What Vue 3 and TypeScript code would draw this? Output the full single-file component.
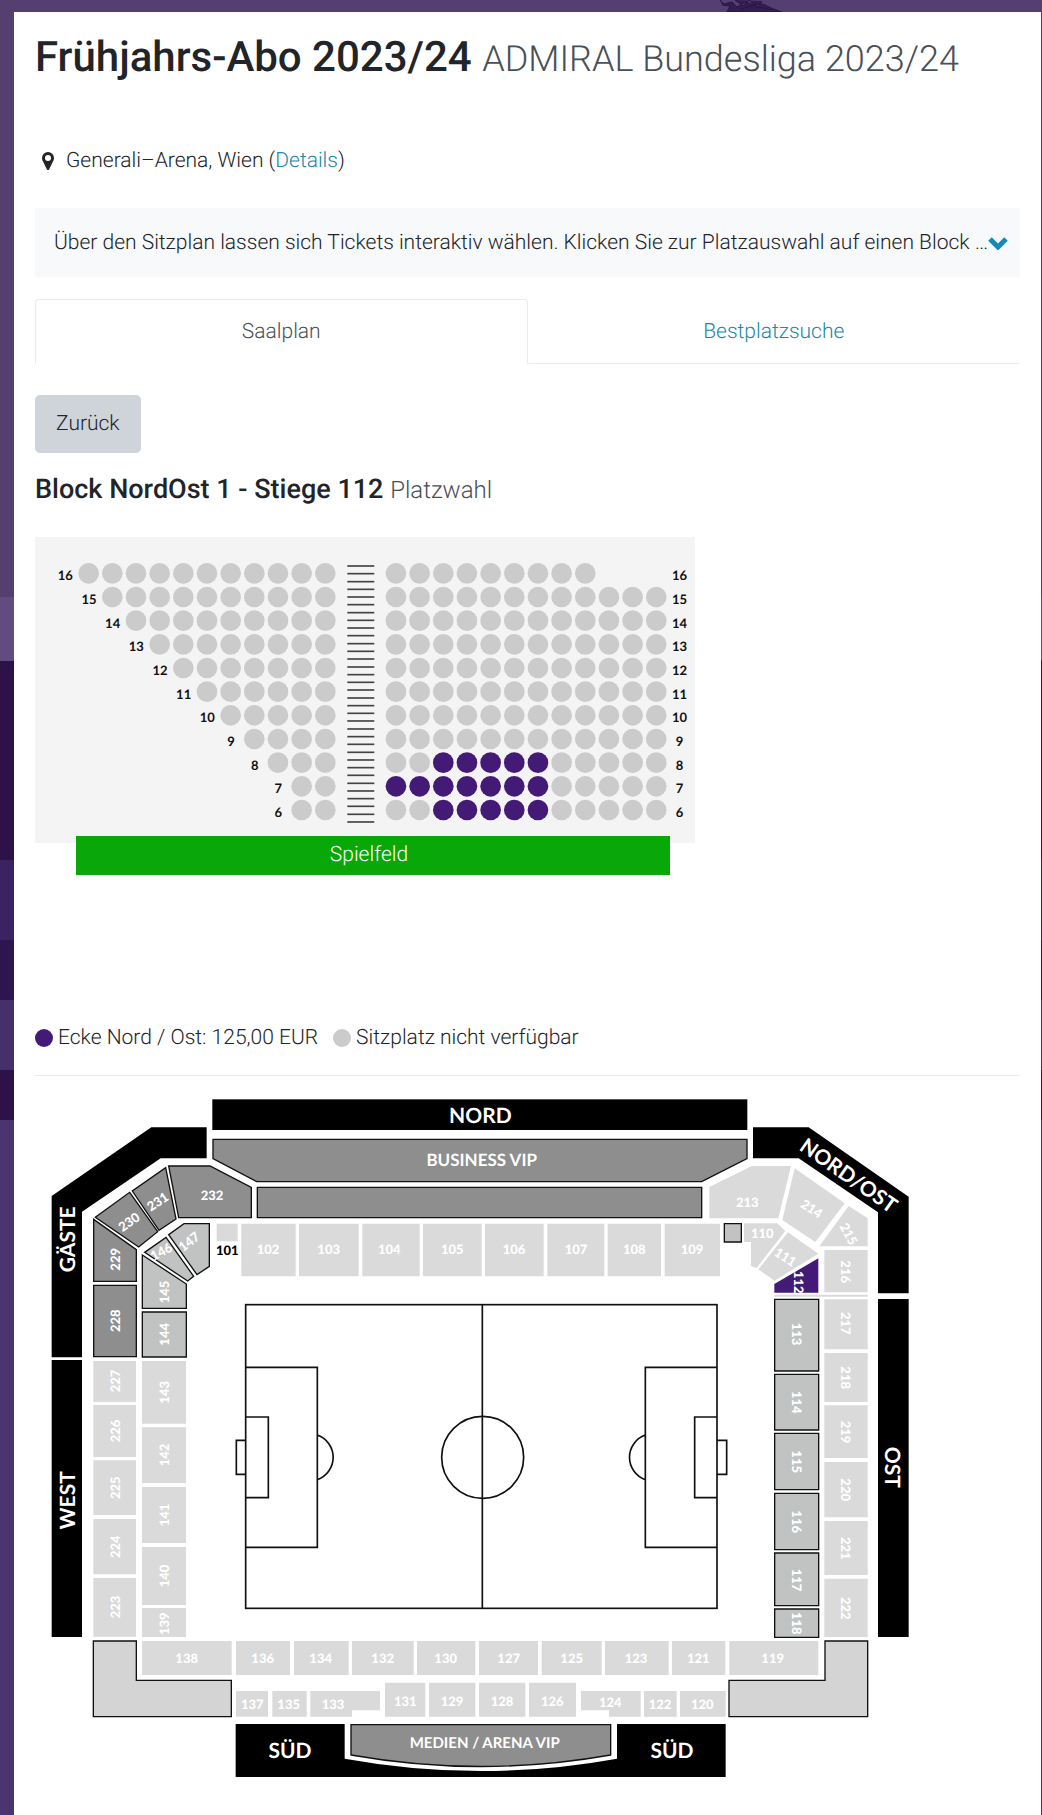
<script setup lang="ts">
import { ref } from 'vue'

type Kind = 'vip' | 'guest' | 'off' | 'selected' | 'corner'

interface Block {
  points: string
  kind: Kind
  label?: string
  x?: number
  y?: number
  angle?: number
}

interface Seat {
  x: number
  y: number
  free: boolean
  id: string
}

const PITCH = 71
const rows = Array.from({ length: 11 }, (_, i) => {
  const y = 109 + PITCH * i
  const first = Math.min(i, 9)
  return { number: 16 - i, y, labelX: 161 + PITCH * (first - 1) + 1, first }
})

const isFree = (row: number, col: number): boolean =>
  (row === 7 && col < 7) || ((row === 8 || row === 6) && col > 1 && col < 7)

const seats: Seat[] = rows.flatMap((row) => {
  const left = Array.from({ length: 11 - row.first }, (_, i) => ({
    x: 161 + PITCH * (row.first + i),
    y: row.y,
    free: false,
    id: `${row.number}-l${i}`,
  }))
  const right = Array.from({ length: row.number === 16 ? 9 : 12 }, (_, i) => ({
    x: 1083 + PITCH * i,
    y: row.y,
    free: isFree(row.number, i),
    id: `${row.number}-r${i}`,
  }))
  return [...left, ...right]
})

const steps = Array.from({ length: 34 }, (_, i) => Math.round(87 + (i * 768) / 33))

const box = (
  x: number, y: number, w: number, h: number, kind: Kind,
  label?: string, lx?: number, ly?: number, angle = 0,
): Block => ({
  points: `${x},${y} ${x + w},${y} ${x + w},${y + h} ${x},${y + h}`,
  kind, label, x: lx, y: ly, angle,
})

const column = (x: number, w: number, lx: number, angle: number, kind: Kind, list: number[][]): Block[] =>
  list.map(([n, y, h, ly]) => box(x, y, w, h, kind, String(n), lx, ly, angle))

const line = (y: number, h: number, ly: number, list: number[][]): Block[] =>
  list.map(([n, x, right, lx]) => box(x, y, right - x, h, 'off', String(n), lx, ly))

const blocks: Block[] = [
  { points: '534,130 2136,130 2136,188 2000,257 665,257 534,188', kind: 'vip' },
  box(667, 274, 1333, 91, 'vip'),
  { points: '401,210 525,210 649,274 649,365 431,365', kind: 'vip', label: '232', x: 531, y: 299 },
  { points: '392,215 423,369 372,403 292,285', kind: 'vip', label: '231', x: 368, y: 317, angle: -33 },
  { points: '284,289 368,407 311,453 181,364', kind: 'vip', label: '230', x: 282, y: 378, angle: -35 },
  { points: '176,370 304,461 304,556 176,556', kind: 'vip', label: '229', x: 241, y: 490, angle: -90 },
  box(176, 568, 128, 214, 'vip', '228', 241, 674, -90),
  { points: '447,383 523,383 523,511 486,536 401,416', kind: 'guest', label: '147', x: 462, y: 437, angle: -38 },
  { points: '393,424 476,541 458,555 329,469', kind: 'guest', label: '146', x: 379, y: 467, angle: -28 },
  { points: '322,477 454,564 454,637 322,637', kind: 'guest', label: '145', x: 389, y: 588, angle: -90 },
  box(322, 648, 132, 135, 'guest', '144', 389, 715, -90),
  box(545, 383, 63, 53, 'off'),
  ...line(383, 158, 461, [
    [102, 619, 782, 699], [103, 792, 971, 881], [104, 982, 1154, 1063], [105, 1164, 1340, 1252],
    [106, 1350, 1526, 1437], [107, 1537, 1708, 1623], [108, 1718, 1878, 1798], [109, 1889, 2055, 1971],
  ]),
  box(2068, 383, 51, 55, 'guest'),
  { points: '2023,273 2150,210 2268,210 2230,367 2023,367', kind: 'off', label: '213', x: 2137, y: 319 },
  { points: '2279,217 2429,322 2341,438 2242,372', kind: 'off', label: '214', x: 2330, y: 338, angle: 33 },
  { points: '2441,330 2498,367 2498,451 2353,451', kind: 'off', label: '215', x: 2441, y: 414, angle: 62 },
  { points: '2127,382 2227,382 2251,405 2165,516 2148,510 2148,438 2127,438', kind: 'off', label: '110', x: 2182, y: 413 },
  { points: '2259,409 2350,473 2219,554 2170,520', kind: 'off', label: '111', x: 2251, y: 483, angle: 33 },
  { points: '2350,487 2350,590 2218,590 2218,564', kind: 'selected', label: '112', x: 2291, y: 559, angle: 90 },
  box(2218, 596, 280, 6, 'off'),
  ...column(2368, 130, 2432, 90, 'off', [
    [216, 462, 127, 527], [217, 610, 150, 682], [218, 771, 147, 845], [219, 928, 158, 1008],
    [220, 1098, 166, 1181], [221, 1275, 162, 1357], [222, 1448, 175, 1537],
  ]),
  ...column(2219, 132, 2285, 90, 'guest', [
    [113, 610, 215, 714], [114, 835, 167, 919], [115, 1012, 169, 1097],
    [116, 1192, 169, 1277], [117, 1371, 158, 1452], [118, 1539, 85, 1582],
  ]),
  ...column(175, 128, 241, -90, 'off', [
    [227, 795, 123, 855], [226, 927, 156, 1005], [225, 1093, 164, 1175],
    [224, 1269, 166, 1352], [223, 1446, 176, 1533],
  ]),
  ...column(321, 132, 389, -90, 'off', [
    [143, 795, 188, 889], [142, 994, 167, 1077], [141, 1173, 168, 1257],
    [140, 1353, 174, 1440], [139, 1536, 87, 1583],
  ]),
  ...line(1635, 102, 1688, [
    [138, 321, 590, 455], [136, 603, 765, 683], [134, 777, 941, 857], [132, 951, 1136, 1043],
    [130, 1146, 1321, 1232], [127, 1332, 1509, 1421], [125, 1520, 1700, 1610],
    [123, 1710, 1901, 1803], [121, 1911, 2071, 1990], [119, 2083, 2350, 2213],
  ]),
  ...line(1785, 77, 1825, [
    [137, 603, 699, 652], [135, 712, 815, 761], [122, 1827, 1925, 1875], [120, 1935, 2072, 2002],
  ]),
  ...line(1760, 102, 1817, [
    [131, 1050, 1171, 1111], [129, 1182, 1321, 1251], [128, 1332, 1471, 1401], [126, 1482, 1623, 1552],
  ]),
  { points: '826,1785 1035,1785 1035,1843 951,1843 951,1862 826,1862', kind: 'off', label: '133', x: 894, y: 1825 },
  { points: '1638,1785 1817,1785 1817,1862 1722,1862 1722,1843 1638,1843', kind: 'off', label: '124', x: 1726, y: 1818 },
  { points: '175,1635 304,1635 304,1753 589,1753 589,1862 175,1862', kind: 'corner' },
  { points: '2370,1635 2498,1635 2498,1862 2082,1862 2082,1753 2370,1753', kind: 'corner' },
]

const labels = blocks.filter((b) => b.label)

const sides = [
  { text: 'NORD', x: 1336, y: 58, angle: 0 },
  { text: 'GÄSTE', x: 96, y: 430, angle: -90 },
  { text: 'WEST', x: 96, y: 1213, angle: -90 },
  { text: 'NORD/OST', x: 2442, y: 237, angle: 35 },
  { text: 'OST', x: 2575, y: 1114, angle: 90 },
  { text: 'SÜD', x: 765, y: 1962, angle: 0 },
  { text: 'SÜD', x: 1911, y: 1962, angle: 0 },
]

const tabs = ['Saalplan', 'Bestplatzsuche']
const active = ref(0)
</script>

<template>
  <div class="page">
    <svg class="sketch" viewBox="0 0 66 12" aria-hidden="true">
      <path d="M1 0l4 4 8-2 5 5 9-5 8 3 9-1 8 4 8 3 3 1H8l3-6-8-1M16 0l8 6 6-6 9 8 4-7M20 10l14-5 18 5" />
    </svg>
    <main class="card">
      <h1>Frühjahrs-Abo 2023/24 <small>ADMIRAL Bundesliga 2023/24</small></h1>

      <p class="place">
        <svg class="pin" viewBox="0 0 12 18" aria-hidden="true">
          <path fill-rule="evenodd" d="M6 0a6 6 0 0 1 6 6c0 2-.8 3-1.400 4.300L7.200 17.300a1.300 1.300 0 0 1-2.400 0L1.400 10.300C.8 9 0 8 0 6a6 6 0 0 1 6-6zm0 3a3 3 0 1 0 0 6 3 3 0 0 0 0-6z" />
        </svg>
        <span>Generali–Arena, Wien (<a href="#details">Details</a>)</span>
      </p>

      <div class="hint">
        <span class="hint-text">Über den Sitzplan lassen sich Tickets interaktiv wählen. Klicken Sie zur Platzauswahl auf einen Block …</span>
        <button class="more" type="button" aria-label="Mehr anzeigen">
          <svg viewBox="0 0 20 14" aria-hidden="true"><path d="M2 3l8 8 8-8" /></svg>
        </button>
      </div>

      <div class="tabs" role="tablist">
        <button
          v-for="(tab, i) in tabs"
          :key="tab"
          type="button"
          role="tab"
          class="tab"
          :class="{ active: active === i }"
          :aria-selected="active === i"
          @click="active = i"
        >{{ tab }}</button>
      </div>

      <button class="back" type="button">Zurück</button>

      <h2>Block NordOst 1 - Stiege 112 <small>Platzwahl</small></h2>

      <section class="plan">
        <svg viewBox="0 0 1980 918" role="img" aria-label="Sitzplan">
          <circle
            v-for="seat in seats"
            :key="seat.id"
            class="seat"
            :class="{ free: seat.free }"
            :cx="seat.x"
            :cy="seat.y"
            r="31"
          />
          <line v-for="y in steps" :key="y" class="step" x1="937" x2="1018" :y1="y" :y2="y" />
          <template v-for="row in rows" :key="row.number">
            <text class="row-label" :x="row.labelX" :y="row.y + 21">{{ row.number }}</text>
            <text class="row-label" x="1934" :y="row.y + 21">{{ row.number }}</text>
          </template>
        </svg>
        <div class="field">Spielfeld</div>
      </section>

      <ul class="legend">
        <li><i class="dot free"></i>Ecke Nord / Ost: 125,00 EUR</li>
        <li><i class="dot"></i>Sitzplatz nicht verfügbar</li>
      </ul>

      <svg class="stadium" viewBox="0 0 2955 2157" role="img" aria-label="Stadionplan">
        <g class="stand">
          <rect x="532" y="10" width="1605" height="92" />
          <polygon points="50,300 349,94 515,94 515,187 377,187 141,347 141,784 50,784" />
          <polygon points="2154,94 2321,94 2621,302 2621,592 2529,592 2529,349 2291,187 2154,187" />
          <rect x="50" y="792" width="91" height="831" />
          <rect x="2529" y="609" width="92" height="1014" />
          <path d="M602 1884H929V1988Q1337 2062 1746 1988V1884H2072V2043H602Z" />
        </g>
        <path class="vip" d="M948 1886H1727V1977Q1337 2046 948 1977Z" />
        <polygon v-for="(b, i) in blocks" :key="i" :class="b.kind" :points="b.points" />
        <text
          v-for="b in labels"
          :key="b.label"
          class="block-label"
          :transform="`translate(${b.x} ${b.y}) rotate(${b.angle ?? 0})`"
          y="14"
        >{{ b.label }}</text>
        <text class="block-label dark" x="577" y="478">101</text>
        <text
          v-for="(s, i) in sides"
          :key="`side${i}`"
          class="side-label"
          :transform="`translate(${s.x} ${s.y}) rotate(${s.angle})`"
          y="24"
        >{{ s.text }}</text>
        <text class="vip-label" x="1340" y="210">BUSINESS VIP</text>
        <text class="vip-label media" x="1349" y="1956">MEDIEN / ARENA VIP</text>
        <g class="pitch">
          <rect x="632" y="626" width="1414" height="911" />
          <path d="M1342 626V1537" />
          <circle cx="1343" cy="1084" r="123" />
          <path d="M632 814H847V1354H632M632 963H700V1205H632M632 1033H604V1135H632M847 1017A71 71 0 0 1 847 1151" />
          <path d="M2046 814H1831V1354H2046M2046 963H1979V1205H2046M2046 1033H2075V1135H2046M1831 1017A71 71 0 0 0 1831 1151" />
        </g>
      </svg>
    </main>
  </div>
</template>

<style>
body {
  margin: 0;
}
</style>

<style scoped>
.page {
  position: relative;
  box-sizing: border-box;
  padding: 12px 1px 0 14px;
  background: linear-gradient(#553f70 0 597px, #614b80 597px 661px, #2c1249 661px 860px, #3b2260 860px 940px, #2f154f 940px 1000px, #46306b 1000px 1070px, #2c1249 1070px 1120px, #4a3570 1120px);
  color: #212529;
  font: 300 21px/30px Roboto, sans-serif;
  text-rendering: geometricPrecision;
}

.sketch {
  position: absolute;
  top: 0;
  left: 69%;
  width: 66px;
  height: 12px;
  fill: #331d52;
  stroke: #2a1548;
}

.card {
  padding: 21px 21px 0;
  background: #fff;
}

h1,
h2,
p,
ul {
  margin: 0;
  padding: 0;
}

h1 {
  font-size: 42px;
  font-weight: 500;
  line-height: 50px;
}

h1 small {
  font-size: 36px;
}

h2 {
  margin-top: 19px;
  font-size: 27px;
  font-weight: 500;
  line-height: 34px;
}

h2 small {
  font-size: 24px;
}

small {
  color: #495057;
  font-weight: 300;
  line-height: 1;
}

a {
  color: #1c88a8;
  text-decoration: none;
}

.place {
  display: flex;
  align-items: center;
  gap: 12px;
  margin-top: 63px;
  padding-left: 7px;
}

.pin {
  width: 12px;
  height: 18px;
  fill: #212529;
}

.hint {
  display: flex;
  align-items: center;
  height: 69px;
  margin-top: 32px;
  padding: 0 8px 0 19px;
  background: #f8f9fb;
}

.hint-text {
  overflow: hidden;
  white-space: nowrap;
}

button {
  font: inherit;
  text-rendering: inherit;
  cursor: pointer;
}

.more {
  flex: none;
  display: flex;
  padding: 0;
  border: 0;
  background: none;
}

.more svg {
  width: 20px;
  height: 14px;
  fill: none;
  stroke: #1a88b6;
  stroke-width: 5;
}

.tabs {
  display: flex;
  margin-top: 22px;
}

.tab {
  flex: 1;
  height: 65px;
  padding: 0;
  border: 1px solid transparent;
  border-bottom-color: #e9ecef;
  background: none;
  color: #1c88a8;
}

.tab.active {
  border-color: #e9ecef #e9ecef transparent;
  border-radius: 4px 4px 0 0;
  color: #495057;
}

.back {
  display: block;
  height: 58px;
  margin-top: 31px;
  padding: 0 20px;
  border: 1px solid #ced4da;
  border-radius: 5px;
  background: #ced4da;
  color: #212529;
}

.plan {
  width: 67%;
  margin-top: 31px;
}

.plan svg {
  display: block;
  width: 100%;
  background: #f4f4f4;
}

.seat {
  fill: #cbcbcb;
}

.seat.free {
  fill: #431a75;
  cursor: pointer;
}

.step {
  stroke: #444;
  stroke-width: 5;
}

.row-label {
  fill: #111;
  font: 700 39px Lato, sans-serif;
  text-anchor: middle;
}

.field {
  position: relative;
  margin: -7px 25px 0 41px;
  padding-right: 8px;
  background: #07a807;
  color: #fff;
  line-height: 39px;
  text-align: center;
}

.legend {
  display: flex;
  gap: 15px;
  margin-top: 148px;
  padding-bottom: 22px;
  border-bottom: 1px solid #e9ecef;
  list-style: none;
}

.legend li {
  display: flex;
  align-items: center;
  gap: 5px;
}

.dot {
  width: 18px;
  height: 18px;
  border-radius: 50%;
  background: #cbcbcb;
}

.dot.free {
  background: #431a75;
}

.stadium {
  display: block;
  width: 100%;
  margin-top: 20px;
}

.stand {
  fill: #000;
}

.vip,
.guest,
.corner {
  fill: #8e8e8e;
  stroke: #111;
  stroke-width: 4;
}

.guest {
  fill: #c1c3c2;
}

.corner {
  fill: #d4d4d4;
}

.off {
  fill: #dadada;
}

.selected {
  fill: #431a75;
}

.block-label,
.side-label,
.vip-label {
  fill: #fff;
  font: 900 39px Lato, sans-serif;
  text-anchor: middle;
}

.block-label.dark {
  fill: #000;
}

.side-label {
  font-size: 63px;
  font-weight: 700;
}

.vip-label {
  font-size: 51px;
  font-weight: 700;
}

.vip-label.media {
  font-size: 45px;
}

.pitch {
  fill: none;
  stroke: #111;
  stroke-width: 5;
}
</style>
